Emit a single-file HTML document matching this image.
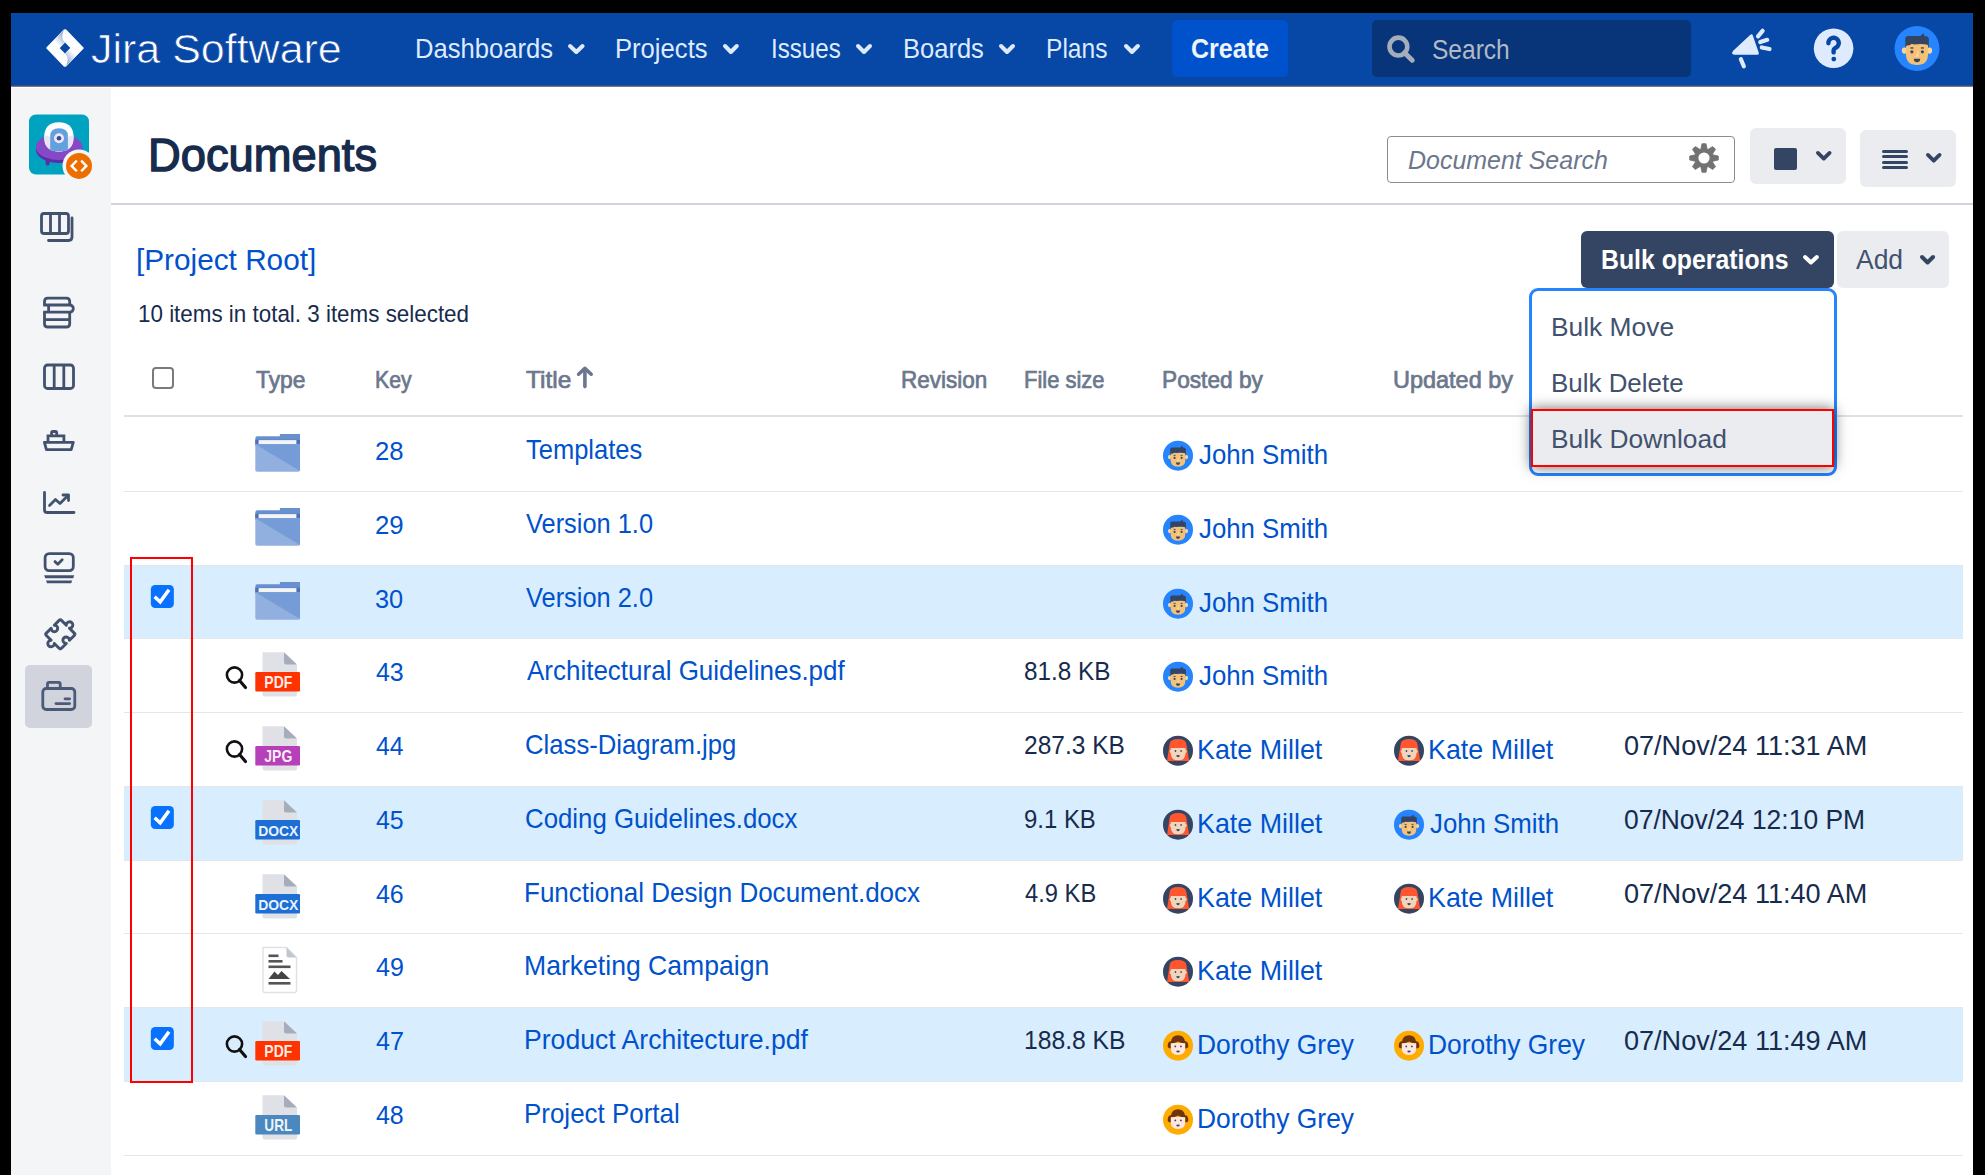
<!DOCTYPE html>
<html><head><meta charset="utf-8"><style>
html,body{margin:0;padding:0;}
body{width:1985px;height:1175px;position:relative;overflow:hidden;background:#000;font-family:"Liberation Sans",sans-serif;}
.t{position:absolute;white-space:nowrap;line-height:1;}
svg{overflow:visible}
</style></head><body>
<div style="position:absolute;left:0.0px;top:0.0px;width:1985.0px;height:1175.0px;background:#000"></div>
<div style="position:absolute;left:11.0px;top:13.0px;width:1962.0px;height:1162.0px;background:#fff"></div>
<div style="position:absolute;left:11.0px;top:13.0px;width:1962.0px;height:73.0px;background:#0747A6"></div>
<div style="position:absolute;left:11.0px;top:85.4px;width:1962.0px;height:1.6px;background:linear-gradient(#1E3A78,#8A8E96)"></div>
<div style="position:absolute;left:11.0px;top:88.0px;width:100.0px;height:1087.0px;background:#F4F5F7"></div>
<svg style="position:absolute;left:44.5px;top:27.7px" width="40" height="40" viewBox="0 0 40 40"><defs>
<linearGradient id="lgA" gradientUnits="userSpaceOnUse" x1="19" y1="8" x2="11" y2="15"><stop offset="0" stop-color="#9CB3DD"/><stop offset="1" stop-color="#ffffff"/></linearGradient>
<linearGradient id="lgB" gradientUnits="userSpaceOnUse" x1="21" y1="32" x2="29" y2="25"><stop offset="0" stop-color="#9CB3DD"/><stop offset="1" stop-color="#ffffff"/></linearGradient></defs>
<path d="M20 1.4 Q20.6 1.1 21.2 1.6 L38.2 19.2 Q38.9 20 38.2 20.8 L21.2 38.4 Q20 39.3 18.8 38.4 L1.8 20.8 Q1.1 20 1.8 19.2 L18.8 1.6 Q19.4 1.1 20 1.4 Z M20 14.6 L14.6 20 L20 25.4 L25.4 20 Z" fill="#fff" fill-rule="evenodd"/>
<path d="M19.2 1.8 L1.8 19.2 Q1.1 20 1.8 20.8 L14.6 20 L20 14.6 Q15 10 19.2 1.8 Z" fill="url(#lgA)"/>
<path d="M20.8 38.2 L38.2 20.8 Q38.9 20 38.2 19.2 L25.4 20 L20 25.4 Q25 30 20.8 38.2 Z" fill="url(#lgB)"/></svg>
<div class="t" style="left:90.76px;top:27.71px;font-size:41.57px;color:#FFFFFF;transform:scaleX(1.0339);transform-origin:0 0;-webkit-text-stroke:0.7px #0747A6;">Jira Software</div>
<div class="t" style="left:414.55px;top:36.34px;font-size:26.89px;color:#DEEBFF;transform:scaleX(0.9518);transform-origin:0 0;">Dashboards</div>
<svg style="position:absolute;left:565.8px;top:41.9px" width="20.600000000000023" height="14.0" viewBox="0 0 20.600000000000023 14.0"><polyline points="4.04,4.04 10.300000000000011,9.96 16.560000000000024,4.04" fill="none" stroke="#DEEBFF" stroke-width="4.08" stroke-linecap="round" stroke-linejoin="round"/></svg>
<div class="t" style="left:615.35px;top:36.34px;font-size:26.89px;color:#DEEBFF;transform:scaleX(0.9534);transform-origin:0 0;">Projects</div>
<svg style="position:absolute;left:721.2px;top:41.9px" width="19.799999999999955" height="14.0" viewBox="0 0 19.799999999999955 14.0"><polyline points="4.04,4.04 9.899999999999977,9.96 15.759999999999955,4.04" fill="none" stroke="#DEEBFF" stroke-width="4.08" stroke-linecap="round" stroke-linejoin="round"/></svg>
<div class="t" style="left:770.53px;top:36.34px;font-size:26.89px;color:#DEEBFF;transform:scaleX(0.8985);transform-origin:0 0;">Issues</div>
<svg style="position:absolute;left:854.0px;top:41.9px" width="20" height="14.0" viewBox="0 0 20 14.0"><polyline points="4.04,4.04 10.0,9.96 15.96,4.04" fill="none" stroke="#DEEBFF" stroke-width="4.08" stroke-linecap="round" stroke-linejoin="round"/></svg>
<div class="t" style="left:902.96px;top:36.34px;font-size:26.89px;color:#DEEBFF;transform:scaleX(0.9495);transform-origin:0 0;">Boards</div>
<svg style="position:absolute;left:997.0px;top:41.9px" width="20" height="14.0" viewBox="0 0 20 14.0"><polyline points="4.04,4.04 10.0,9.96 15.96,4.04" fill="none" stroke="#DEEBFF" stroke-width="4.08" stroke-linecap="round" stroke-linejoin="round"/></svg>
<div class="t" style="left:1046.43px;top:36.34px;font-size:26.89px;color:#DEEBFF;transform:scaleX(0.9137);transform-origin:0 0;">Plans</div>
<svg style="position:absolute;left:1121.5px;top:41.9px" width="19.90000000000009" height="14.0" viewBox="0 0 19.90000000000009 14.0"><polyline points="4.04,4.04 9.950000000000045,9.96 15.860000000000092,4.04" fill="none" stroke="#DEEBFF" stroke-width="4.08" stroke-linecap="round" stroke-linejoin="round"/></svg>
<div style="position:absolute;left:1172.0px;top:20.0px;width:116.0px;height:56.5px;background:#0052CC;border-radius:5px"></div>
<div class="t" style="left:1191.00px;top:35.84px;font-size:26.89px;color:#EEF3FC;font-weight:bold;transform:scaleX(0.9313);transform-origin:0 0;">Create</div>
<div style="position:absolute;left:1372.0px;top:20.0px;width:319.0px;height:56.5px;background:#08357A;border-radius:5px"></div>
<svg style="position:absolute;left:1385.0px;top:34.0px" width="32" height="30" viewBox="0 0 32 30"><circle cx="13.4" cy="12.55" r="8.9" fill="none" stroke="#A5ADBA" stroke-width="4.6"/><line x1="19.5" y1="18.8" x2="27.2" y2="26.2" stroke="#A5ADBA" stroke-width="5" stroke-linecap="round"/></svg>
<div class="t" style="left:1431.70px;top:36.54px;font-size:26.89px;color:#B3BAC5;transform:scaleX(0.9130);transform-origin:0 0;">Search</div>
<svg style="position:absolute;left:1729.0px;top:27.0px" width="46" height="46" viewBox="0 0 46 46"><path d="M5 24 L21.9 8.3 Q22.6 7.6 23 8.6 L29 26 Q29.2 27 28.2 27 L5.5 27 Q2.5 26.5 5 24 Z" fill="#DEEBFF" stroke="#DEEBFF" stroke-width="1.6" stroke-linejoin="round"/>
<line x1="11.9" y1="32.3" x2="14.8" y2="39.3" stroke="#DEEBFF" stroke-width="4.2" stroke-linecap="round"/>
<line x1="29" y1="9.3" x2="33.6" y2="3.8" stroke="#DEEBFF" stroke-width="4.2" stroke-linecap="round"/>
<line x1="31.3" y1="15" x2="38.2" y2="12.8" stroke="#DEEBFF" stroke-width="4.2" stroke-linecap="round"/>
<line x1="32.8" y1="20.5" x2="40.5" y2="22" stroke="#DEEBFF" stroke-width="4.2" stroke-linecap="round"/></svg>
<svg style="position:absolute;left:1813.0px;top:27.0px" width="42" height="42" viewBox="0 0 42 42"><circle cx="20.6" cy="21.3" r="19.8" fill="#DEEBFF"/>
<path d="M15.4 16.2 A5.2 5.2 0 1 1 23.3 20.4 Q20.6 21.6 20.6 23.4 L20.6 25.4" fill="none" stroke="#0747A6" stroke-width="4.4" stroke-linecap="round"/>
<circle cx="20.8" cy="32.1" r="2.4" fill="#0747A6"/></svg>
<svg style="position:absolute;left:1892.0px;top:24.0px" width="50" height="50" viewBox="0 0 50 50"><g transform="translate(25,24.5) scale(1.5)"><circle r="15" fill="#2684FF"/>
<ellipse cx="-8.4" cy="1.4" rx="1.7" ry="2.1" fill="#F9D596"/><ellipse cx="8.4" cy="1.4" rx="1.7" ry="2.1" fill="#F9D596"/>
<path d="M-7.4 -3 L7.4 -3 L7.4 3.5 Q7.4 11 0 11 Q-7.4 11 -7.4 3.5 Z" fill="#F4C176"/>
<path d="M-7.8 -0.5 L-7.8 -6.5 Q-7.8 -8.3 -6 -8.3 L2.2 -8.3 L4.5 -10.3 L4.8 -8.3 Q7.9 -8.3 7.9 -6.3 L7.9 -0.5 L7 -2.5 Q3 -3.6 -2 -2.6 L-3.5 -3.2 L-5 -2.2 L-6.8 -2 Z" fill="#344563"/>
<rect x="-4.4" y="-0.8" width="2" height="0.9" fill="#344563"/><rect x="2.6" y="-0.8" width="2" height="0.9" fill="#344563"/>
<circle cx="-3.4" cy="2.2" r="1.05" fill="#344563"/><circle cx="3.6" cy="2.2" r="1.05" fill="#344563"/>
<path d="M0.1 1.5 L1 1.5 L1 5.5 L-1.2 5.5 Q-1 4 0.1 3.8 Z" fill="#FAD79B"/>
<path d="M-2.2 6.8 L2.2 6.8 Q2 9.2 0 9.2 Q-2 9.2 -2.2 6.8 Z" fill="#344563"/></g></svg>
<svg style="position:absolute;left:26.0px;top:111.0px" width="70" height="70" viewBox="0 0 70 70"><rect x="3" y="3.5" width="60" height="60" rx="7" fill="#00A3BF"/>
<ellipse cx="33.2" cy="38.5" rx="23.4" ry="13.6" fill="#5F2BA8"/>
<ellipse cx="33.2" cy="36" rx="23.4" ry="13" fill="#8549C5"/>
<rect x="19.6" y="47" width="4" height="7.5" rx="2" fill="#5F2BA8"/>
<path d="M18.2 26.5 Q18.2 11.3 32.9 11.3 Q47.6 11.3 47.6 26.5 Q47.6 40.5 32.9 40.5 Q18.2 40.5 18.2 26.5Z" fill="#fff"/>
<path d="M18.3 24 Q32.9 30 47.5 24 Q48 40.5 32.9 40.5 Q17.8 40.5 18.3 24Z" fill="#ECE3F7"/>
<path d="M24.2 39.6 L24.2 25 Q24.2 17.3 33 17.3 Q41.9 17.3 41.9 25 L41.9 39.6 Q33 41 24.2 39.6 Z" fill="#62A1DE"/>
<circle cx="33" cy="27.3" r="5" fill="#EEE6F8"/><circle cx="33" cy="27.3" r="2.3" fill="#344C8A"/>
<circle cx="53" cy="54.9" r="16.5" fill="#F4F5F7"/>
<circle cx="53" cy="54.9" r="13" fill="#EC6D00"/>
<polyline points="50,50.4 45.6,54.9 50,59.4" fill="none" stroke="#fff" stroke-width="2.4" stroke-linecap="square"/>
<polyline points="56,50.4 60.4,54.9 56,59.4" fill="none" stroke="#fff" stroke-width="2.4" stroke-linecap="square"/></svg>
<svg style="position:absolute;left:38.0px;top:210.0px" width="40" height="36" viewBox="0 0 40 36"><rect x="3.5" y="3.5" width="27" height="20" rx="2.5" fill="none" stroke="#42526E" stroke-width="2.8"/>
<line x1="12.5" y1="4" x2="12.5" y2="23" stroke="#42526E" stroke-width="2.8"/><line x1="21.5" y1="4" x2="21.5" y2="23" stroke="#42526E" stroke-width="2.8"/>
<path d="M34 8 L34 27 Q34 30.5 30.5 30.5 L10.5 30.5" fill="none" stroke="#42526E" stroke-width="2.8" stroke-linecap="round"/></svg>
<svg style="position:absolute;left:40.0px;top:294.0px" width="38" height="38" viewBox="0 0 38 38"><g fill="none" stroke="#42526E" stroke-width="2.8">
<path d="M4.5 11 L4.5 7.5 Q4.5 4.2 7.8 4.2 L26.4 4.2 Q29.7 4.2 29.7 7.5 L29.7 11"/>
<path d="M3.2 11 L29.7 11 A3.6 3.6 0 0 1 29.7 18.2 L3.2 18.2"/>
<line x1="8.6" y1="11" x2="8.6" y2="18.2"/>
<path d="M4.5 18.2 L4.5 29.7 Q4.5 33 7.8 33 L26.4 33 Q29.7 33 29.7 29.7 L29.7 18.2"/>
<line x1="4.5" y1="25.6" x2="29.7" y2="25.6"/></g></svg>
<svg style="position:absolute;left:40.0px;top:361.0px" width="38" height="32" viewBox="0 0 38 32"><rect x="4.5" y="4" width="29" height="23.5" rx="3" fill="none" stroke="#42526E" stroke-width="2.8"/>
<line x1="14.2" y1="4" x2="14.2" y2="27.5" stroke="#42526E" stroke-width="2.8"/><line x1="23.8" y1="4" x2="23.8" y2="27.5" stroke="#42526E" stroke-width="2.8"/></svg>
<svg style="position:absolute;left:40.0px;top:426.0px" width="38" height="30" viewBox="0 0 38 30"><path d="M4.4 16.4 L33.3 16.4 L31.2 23.6 L6.4 23.6 Z" fill="none" stroke="#42526E" stroke-width="2.8" stroke-linejoin="round"/>
<path d="M8 16.4 L8 9.9 L23.9 9.9 L23.9 16.4" fill="none" stroke="#42526E" stroke-width="2.8"/>
<path d="M11.6 9.9 L11.6 6.8 Q11.6 5.5 12.9 5.5 L15.4 5.5 Q16.7 5.5 16.7 6.8 L16.7 9.9" fill="none" stroke="#42526E" stroke-width="2.8"/></svg>
<svg style="position:absolute;left:40.0px;top:490.0px" width="38" height="28" viewBox="0 0 38 28"><path d="M4.5 2.5 L4.5 20 Q4.5 22.5 7 22.5 L34 22.5" fill="none" stroke="#42526E" stroke-width="2.8" stroke-linecap="round"/>
<polyline points="9.5,15.5 15.5,9.5 20,13.5 28,5.5" fill="none" stroke="#42526E" stroke-width="2.8" stroke-linecap="round" stroke-linejoin="round"/>
<polyline points="23,5 28.5,5 28.5,10.5" fill="none" stroke="#42526E" stroke-width="2.8" stroke-linecap="round" stroke-linejoin="round"/></svg>
<svg style="position:absolute;left:40.0px;top:549.0px" width="38" height="38" viewBox="0 0 38 38"><rect x="5.1" y="4.6" width="28.2" height="17" rx="4" fill="none" stroke="#42526E" stroke-width="2.8"/>
<polyline points="15,12.6 17.8,15.2 22.2,10.8" fill="none" stroke="#42526E" stroke-width="2.8" stroke-linecap="round" stroke-linejoin="round"/>
<path d="M4.2 26.3 L34.2 26.3 L33.2 29.2 L5.2 29.2 Z" fill="#42526E"/>
<path d="M6 31.4 L32.2 31.4 L31.2 34.3 L7 34.3 Z" fill="#42526E"/></svg>
<svg style="position:absolute;left:40.0px;top:614.0px" width="40" height="40" viewBox="0 0 40 40"><path d="M-8.6 -10.2 L-2.1 -10.2 A3.1 3.1 0 1 1 2.1 -10.2 L8.6 -10.2 Q10.2 -10.2 10.2 -8.6 L10.2 -2.1 A3.1 3.1 0 1 0 10.2 2.1 L10.2 8.6 Q10.2 10.2 8.6 10.2 L2.1 10.2 A3.1 3.1 0 1 1 -2.1 10.2 L-8.6 10.2 Q-10.2 10.2 -10.2 8.6 L-10.2 2.1 A3.1 3.1 0 1 0 -10.2 -2.1 L-10.2 -8.6 Q-10.2 -10.2 -8.6 -10.2 Z" fill="none" stroke="#42526E" stroke-width="2.8" stroke-linejoin="round" transform="translate(20.3 20.3) rotate(45) scale(1.05)"/></svg>
<div style="position:absolute;left:25.0px;top:665.0px;width:67.0px;height:62.5px;background:#D1D4DD;border-radius:5px"></div>
<svg style="position:absolute;left:40.0px;top:678.0px" width="38" height="36" viewBox="0 0 38 36"><rect x="2.8" y="10.5" width="32" height="21" rx="3.5" fill="none" stroke="#4A5A78" stroke-width="2.8"/>
<path d="M7.5 10 L7.5 6 Q7.5 4.4 9.1 4.4 L18.6 4.4 Q20.2 4.4 20.2 6 L20.2 10" fill="none" stroke="#4A5A78" stroke-width="2.8"/>
<line x1="16" y1="25.6" x2="29.6" y2="25.6" stroke="#4A5A78" stroke-width="2.8" stroke-linecap="round"/><line x1="25" y1="20.8" x2="29.6" y2="20.8" stroke="#4A5A78" stroke-width="2.8" stroke-linecap="round"/></svg>
<div class="t" style="left:148.38px;top:133.42px;font-size:45.93px;color:#172B4D;transform:scaleX(0.9862);transform-origin:0 0;-webkit-text-stroke:1.38px #172B4D;">Documents</div>
<div style="position:absolute;left:1387.0px;top:136.0px;width:348.0px;height:47.0px;border:1.5px solid #8C8C8C;border-radius:4px;box-sizing:border-box;background:#fff"></div>
<div class="t" style="left:1407.95px;top:146.95px;font-size:26.16px;color:#6B778C;font-style:italic;transform:scaleX(0.9544);transform-origin:0 0;">Document Search</div>
<svg style="position:absolute;left:1689.1px;top:142.6px" width="30" height="30" viewBox="0 0 30 30"><polygon points="23.00,11.60 29.30,13.00 29.30,17.00 23.00,18.40" fill="#727272" stroke="#727272" stroke-width="0.8" stroke-linejoin="round"/><polygon points="23.06,18.25 26.53,23.70 23.70,26.53 18.25,23.06" fill="#727272" stroke="#727272" stroke-width="0.8" stroke-linejoin="round"/><polygon points="18.40,23.00 17.00,29.30 13.00,29.30 11.60,23.00" fill="#727272" stroke="#727272" stroke-width="0.8" stroke-linejoin="round"/><polygon points="11.75,23.06 6.30,26.53 3.47,23.70 6.94,18.25" fill="#727272" stroke="#727272" stroke-width="0.8" stroke-linejoin="round"/><polygon points="7.00,18.40 0.70,17.00 0.70,13.00 7.00,11.60" fill="#727272" stroke="#727272" stroke-width="0.8" stroke-linejoin="round"/><polygon points="6.94,11.75 3.47,6.30 6.30,3.47 11.75,6.94" fill="#727272" stroke="#727272" stroke-width="0.8" stroke-linejoin="round"/><polygon points="11.60,7.00 13.00,0.70 17.00,0.70 18.40,7.00" fill="#727272" stroke="#727272" stroke-width="0.8" stroke-linejoin="round"/><polygon points="18.25,6.94 23.70,3.47 26.53,6.30 23.06,11.75" fill="#727272" stroke="#727272" stroke-width="0.8" stroke-linejoin="round"/><circle cx="15" cy="15" r="9.2" fill="#727272"/><circle cx="15" cy="15" r="5.6" fill="#fff"/></svg>
<div style="position:absolute;left:1750.0px;top:128.0px;width:96.0px;height:55.5px;background:#EBECF0;border-radius:6px"></div>
<div style="position:absolute;left:1774.2px;top:147.6px;width:22.6px;height:22.2px;background:#344563;border-radius:2px"></div>
<svg style="position:absolute;left:1814.0px;top:149.0px" width="19.5" height="13.5" viewBox="0 0 19.5 13.5"><polyline points="3.92,3.92 9.75,9.58 15.58,3.92" fill="none" stroke="#344563" stroke-width="3.84" stroke-linecap="round" stroke-linejoin="round"/></svg>
<div style="position:absolute;left:1860.0px;top:130.0px;width:96.0px;height:56.7px;background:#EBECF0;border-radius:6px"></div>
<div style="position:absolute;left:1882.4px;top:149.6px;width:25.9px;height:3.2px;background:#344563;border-radius:1.5px"></div>
<div style="position:absolute;left:1882.4px;top:155.2px;width:25.9px;height:3.2px;background:#344563;border-radius:1.5px"></div>
<div style="position:absolute;left:1882.4px;top:160.7px;width:25.9px;height:3.2px;background:#344563;border-radius:1.5px"></div>
<div style="position:absolute;left:1882.4px;top:166.2px;width:25.9px;height:3.2px;background:#344563;border-radius:1.5px"></div>
<svg style="position:absolute;left:1923.8px;top:151.0px" width="19.5" height="13.599999999999994" viewBox="0 0 19.5 13.599999999999994"><polyline points="3.92,3.92 9.75,9.679999999999994 15.58,3.92" fill="none" stroke="#344563" stroke-width="3.84" stroke-linecap="round" stroke-linejoin="round"/></svg>
<div style="position:absolute;left:111.0px;top:203.0px;width:1862.0px;height:1.5px;background:#D0D5DD"></div>
<div class="t" style="left:136.22px;top:244.85px;font-size:29.94px;color:#0052CC;transform:scaleX(0.9938);transform-origin:0 0;">[Project Root]</div>
<div class="t" style="left:137.82px;top:301.75px;font-size:24.27px;color:#172B4D;transform:scaleX(0.9227);transform-origin:0 0;">10 items in total. 3 items selected</div>
<div style="position:absolute;left:1581.0px;top:231.0px;width:252.6px;height:56.5px;background:#344563;border-radius:6px"></div>
<div class="t" style="left:1600.59px;top:246.51px;font-size:27.03px;color:#FFFFFF;font-weight:bold;transform:scaleX(0.9185);transform-origin:0 0;">Bulk operations</div>
<svg style="position:absolute;left:1801.4px;top:252.5px" width="19.899999999999864" height="13.5" viewBox="0 0 19.899999999999864 13.5"><polyline points="4.04,4.04 9.949999999999932,9.46 15.859999999999864,4.04" fill="none" stroke="#FFFFFF" stroke-width="4.08" stroke-linecap="round" stroke-linejoin="round"/></svg>
<div style="position:absolute;left:1837.0px;top:231.0px;width:112.0px;height:56.5px;background:#EBECF0;border-radius:6px"></div>
<div class="t" style="left:1856.10px;top:246.51px;font-size:27.03px;color:#42526E;transform:scaleX(0.9792);transform-origin:0 0;">Add</div>
<svg style="position:absolute;left:1917.6px;top:252.5px" width="19.100000000000136" height="13.5" viewBox="0 0 19.100000000000136 13.5"><polyline points="4.04,4.04 9.550000000000068,9.46 15.060000000000137,4.04" fill="none" stroke="#344563" stroke-width="4.08" stroke-linecap="round" stroke-linejoin="round"/></svg>
<div style="position:absolute;left:151.5px;top:367.0px;width:22.0px;height:22.0px;border:2px solid #7B7B7B;border-radius:4px;box-sizing:border-box;background:#fff"></div>
<div class="t" style="left:255.54px;top:368.42px;font-size:23.84px;color:#6B778C;transform:scaleX(0.9589);transform-origin:0 0;-webkit-text-stroke:0.72px #6B778C;">Type</div>
<div class="t" style="left:375.30px;top:368.42px;font-size:23.84px;color:#6B778C;transform:scaleX(0.8926);transform-origin:0 0;-webkit-text-stroke:0.72px #6B778C;">Key</div>
<div class="t" style="left:525.51px;top:368.42px;font-size:23.84px;color:#6B778C;transform:scaleX(1.0247);transform-origin:0 0;-webkit-text-stroke:0.72px #6B778C;">Title</div>
<div class="t" style="left:900.80px;top:368.42px;font-size:23.84px;color:#6B778C;transform:scaleX(0.9448);transform-origin:0 0;-webkit-text-stroke:0.72px #6B778C;">Revision</div>
<div class="t" style="left:1023.84px;top:368.42px;font-size:23.84px;color:#6B778C;transform:scaleX(0.9220);transform-origin:0 0;-webkit-text-stroke:0.72px #6B778C;">File size</div>
<div class="t" style="left:1162.48px;top:368.42px;font-size:23.84px;color:#6B778C;transform:scaleX(0.9524);transform-origin:0 0;-webkit-text-stroke:0.72px #6B778C;">Posted by</div>
<div class="t" style="left:1392.64px;top:368.42px;font-size:23.84px;color:#6B778C;transform:scaleX(0.9847);transform-origin:0 0;-webkit-text-stroke:0.72px #6B778C;">Updated by</div>
<svg style="position:absolute;left:574.0px;top:365.0px" width="22" height="26" viewBox="0 0 22 26"><line x1="10.9" y1="5" x2="10.9" y2="21.6" stroke="#6B778C" stroke-width="3.6" stroke-linecap="round"/><polyline points="4.6,9.2 10.9,3.4 17.2,9.2" fill="none" stroke="#6B778C" stroke-width="3.6" stroke-linecap="round" stroke-linejoin="round"/></svg>
<div style="position:absolute;left:124.0px;top:415.0px;width:1839.0px;height:2.0px;background:#DFE1E6"></div>
<div style="position:absolute;left:124.0px;top:491.0px;width:1839.0px;height:1.0px;background:#E4E6EA"></div>
<svg style="position:absolute;left:255.0px;top:434.0px" width="46" height="39" viewBox="0 0 46 39"><path d="M0.3 4.4 Q0.3 2.2 2.5 2.2 L24.9 2.2 L24.9 0 L45 0 L45 12 L0.3 12 Z" fill="#6890D0"/>
<rect x="0.3" y="5.8" width="44.7" height="4.6" fill="#4A72B9"/>
<rect x="3.6" y="6.1" width="37.8" height="3.9" fill="#F3F4F6"/>
<path d="M0.3 10.2 L45 10.2 L45 36 Q45 37.8 43.2 37.8 L2.1 37.8 Q0.3 37.8 0.3 36 Z" fill="#92B0DF"/>
<path d="M0.3 10.2 L45 10.2 L45 37 Z" fill="#769CD7"/></svg>
<div class="t" style="left:375.22px;top:437.68px;font-size:26.60px;color:#0052CC;transform:scaleX(0.9657);transform-origin:0 0;">28</div>
<div class="t" style="left:525.99px;top:437.31px;font-size:27.03px;color:#0052CC;transform:scaleX(0.9442);transform-origin:0 0;">Templates</div>
<svg style="position:absolute;left:1161.0px;top:439.0px" width="34" height="34" viewBox="0 0 34 34"><g transform="translate(17,16.7) scale(1.0)"><circle r="15" fill="#2684FF"/>
<ellipse cx="-8.4" cy="1.4" rx="1.7" ry="2.1" fill="#F9D596"/><ellipse cx="8.4" cy="1.4" rx="1.7" ry="2.1" fill="#F9D596"/>
<path d="M-7.4 -3 L7.4 -3 L7.4 3.5 Q7.4 11 0 11 Q-7.4 11 -7.4 3.5 Z" fill="#F4C176"/>
<path d="M-7.8 -0.5 L-7.8 -6.5 Q-7.8 -8.3 -6 -8.3 L2.2 -8.3 L4.5 -10.3 L4.8 -8.3 Q7.9 -8.3 7.9 -6.3 L7.9 -0.5 L7 -2.5 Q3 -3.6 -2 -2.6 L-3.5 -3.2 L-5 -2.2 L-6.8 -2 Z" fill="#344563"/>
<rect x="-4.4" y="-0.8" width="2" height="0.9" fill="#344563"/><rect x="2.6" y="-0.8" width="2" height="0.9" fill="#344563"/>
<circle cx="-3.4" cy="2.2" r="1.05" fill="#344563"/><circle cx="3.6" cy="2.2" r="1.05" fill="#344563"/>
<path d="M0.1 1.5 L1 1.5 L1 5.5 L-1.2 5.5 Q-1 4 0.1 3.8 Z" fill="#FAD79B"/>
<path d="M-2.2 6.8 L2.2 6.8 Q2 9.2 0 9.2 Q-2 9.2 -2.2 6.8 Z" fill="#344563"/></g></svg>
<div class="t" style="left:1198.61px;top:441.51px;font-size:27.03px;color:#0052CC;transform:scaleX(0.9548);transform-origin:0 0;">John Smith</div>
<div style="position:absolute;left:124.0px;top:565.0px;width:1839.0px;height:1.0px;background:#E4E6EA"></div>
<svg style="position:absolute;left:255.0px;top:508.0px" width="46" height="39" viewBox="0 0 46 39"><path d="M0.3 4.4 Q0.3 2.2 2.5 2.2 L24.9 2.2 L24.9 0 L45 0 L45 12 L0.3 12 Z" fill="#6890D0"/>
<rect x="0.3" y="5.8" width="44.7" height="4.6" fill="#4A72B9"/>
<rect x="3.6" y="6.1" width="37.8" height="3.9" fill="#F3F4F6"/>
<path d="M0.3 10.2 L45 10.2 L45 36 Q45 37.8 43.2 37.8 L2.1 37.8 Q0.3 37.8 0.3 36 Z" fill="#92B0DF"/>
<path d="M0.3 10.2 L45 10.2 L45 37 Z" fill="#769CD7"/></svg>
<div class="t" style="left:375.21px;top:511.68px;font-size:26.60px;color:#0052CC;transform:scaleX(0.9704);transform-origin:0 0;">29</div>
<div class="t" style="left:526.37px;top:511.31px;font-size:27.03px;color:#0052CC;transform:scaleX(0.9396);transform-origin:0 0;">Version 1.0</div>
<svg style="position:absolute;left:1161.0px;top:513.0px" width="34" height="34" viewBox="0 0 34 34"><g transform="translate(17,16.7) scale(1.0)"><circle r="15" fill="#2684FF"/>
<ellipse cx="-8.4" cy="1.4" rx="1.7" ry="2.1" fill="#F9D596"/><ellipse cx="8.4" cy="1.4" rx="1.7" ry="2.1" fill="#F9D596"/>
<path d="M-7.4 -3 L7.4 -3 L7.4 3.5 Q7.4 11 0 11 Q-7.4 11 -7.4 3.5 Z" fill="#F4C176"/>
<path d="M-7.8 -0.5 L-7.8 -6.5 Q-7.8 -8.3 -6 -8.3 L2.2 -8.3 L4.5 -10.3 L4.8 -8.3 Q7.9 -8.3 7.9 -6.3 L7.9 -0.5 L7 -2.5 Q3 -3.6 -2 -2.6 L-3.5 -3.2 L-5 -2.2 L-6.8 -2 Z" fill="#344563"/>
<rect x="-4.4" y="-0.8" width="2" height="0.9" fill="#344563"/><rect x="2.6" y="-0.8" width="2" height="0.9" fill="#344563"/>
<circle cx="-3.4" cy="2.2" r="1.05" fill="#344563"/><circle cx="3.6" cy="2.2" r="1.05" fill="#344563"/>
<path d="M0.1 1.5 L1 1.5 L1 5.5 L-1.2 5.5 Q-1 4 0.1 3.8 Z" fill="#FAD79B"/>
<path d="M-2.2 6.8 L2.2 6.8 Q2 9.2 0 9.2 Q-2 9.2 -2.2 6.8 Z" fill="#344563"/></g></svg>
<div class="t" style="left:1198.61px;top:515.51px;font-size:27.03px;color:#0052CC;transform:scaleX(0.9548);transform-origin:0 0;">John Smith</div>
<div style="position:absolute;left:124.0px;top:566.0px;width:1839.0px;height:72.0px;background:#D8EDFE"></div>
<div style="position:absolute;left:124.0px;top:638.0px;width:1839.0px;height:1.0px;background:#E4E6EA"></div>
<svg style="position:absolute;left:150.0px;top:583.6px" width="26" height="26" viewBox="0 0 26 26"><rect x="0.85" y="1" width="23" height="23" rx="4.3" fill="#0872FF"/><polyline points="4.6,12.8 10.2,17.8 19,5.8" fill="none" stroke="#fff" stroke-width="3.5" stroke-linecap="butt" stroke-linejoin="miter"/></svg>
<svg style="position:absolute;left:255.0px;top:582.0px" width="46" height="39" viewBox="0 0 46 39"><path d="M0.3 4.4 Q0.3 2.2 2.5 2.2 L24.9 2.2 L24.9 0 L45 0 L45 12 L0.3 12 Z" fill="#6890D0"/>
<rect x="0.3" y="5.8" width="44.7" height="4.6" fill="#4A72B9"/>
<rect x="3.6" y="6.1" width="37.8" height="3.9" fill="#F3F4F6"/>
<path d="M0.3 10.2 L45 10.2 L45 36 Q45 37.8 43.2 37.8 L2.1 37.8 Q0.3 37.8 0.3 36 Z" fill="#92B0DF"/>
<path d="M0.3 10.2 L45 10.2 L45 37 Z" fill="#769CD7"/></svg>
<div class="t" style="left:375.49px;top:585.68px;font-size:26.60px;color:#0052CC;transform:scaleX(0.9517);transform-origin:0 0;">30</div>
<div class="t" style="left:526.37px;top:585.31px;font-size:27.03px;color:#0052CC;transform:scaleX(0.9396);transform-origin:0 0;">Version 2.0</div>
<svg style="position:absolute;left:1161.0px;top:587.0px" width="34" height="34" viewBox="0 0 34 34"><g transform="translate(17,16.7) scale(1.0)"><circle r="15" fill="#2684FF"/>
<ellipse cx="-8.4" cy="1.4" rx="1.7" ry="2.1" fill="#F9D596"/><ellipse cx="8.4" cy="1.4" rx="1.7" ry="2.1" fill="#F9D596"/>
<path d="M-7.4 -3 L7.4 -3 L7.4 3.5 Q7.4 11 0 11 Q-7.4 11 -7.4 3.5 Z" fill="#F4C176"/>
<path d="M-7.8 -0.5 L-7.8 -6.5 Q-7.8 -8.3 -6 -8.3 L2.2 -8.3 L4.5 -10.3 L4.8 -8.3 Q7.9 -8.3 7.9 -6.3 L7.9 -0.5 L7 -2.5 Q3 -3.6 -2 -2.6 L-3.5 -3.2 L-5 -2.2 L-6.8 -2 Z" fill="#344563"/>
<rect x="-4.4" y="-0.8" width="2" height="0.9" fill="#344563"/><rect x="2.6" y="-0.8" width="2" height="0.9" fill="#344563"/>
<circle cx="-3.4" cy="2.2" r="1.05" fill="#344563"/><circle cx="3.6" cy="2.2" r="1.05" fill="#344563"/>
<path d="M0.1 1.5 L1 1.5 L1 5.5 L-1.2 5.5 Q-1 4 0.1 3.8 Z" fill="#FAD79B"/>
<path d="M-2.2 6.8 L2.2 6.8 Q2 9.2 0 9.2 Q-2 9.2 -2.2 6.8 Z" fill="#344563"/></g></svg>
<div class="t" style="left:1198.61px;top:589.51px;font-size:27.03px;color:#0052CC;transform:scaleX(0.9548);transform-origin:0 0;">John Smith</div>
<div style="position:absolute;left:124.0px;top:712.0px;width:1839.0px;height:1.0px;background:#E4E6EA"></div>
<svg style="position:absolute;left:253.0px;top:650.0px" width="50" height="50" viewBox="0 0 50 50">
<path d="M9.5 2.2 L30.5 2.2 L44 15 L44 44.6 Q44 46.6 42 46.6 L11.5 46.6 Q9.5 46.6 9.5 44.6 Z" fill="#DFE1E6"/>
<path d="M31 2.2 L44 14.5 L33 14.5 Q31 14.5 31 12.5 Z" fill="#A5ADBA"/>
<rect x="2.3" y="22" width="44.7" height="19.5" rx="1.2" fill="#FF3300"/>
<text x="25.3" y="37.9" font-family="Liberation Sans" font-weight="bold" font-size="16.3" fill="#fff" fill-opacity="0.93" text-anchor="middle" textLength="28" lengthAdjust="spacingAndGlyphs">PDF</text></svg>
<svg style="position:absolute;left:222.5px;top:665.3px" width="26" height="26" viewBox="0 0 26 26"><circle cx="11.5" cy="10" r="7.6" fill="none" stroke="#111" stroke-width="2.6"/><line x1="16.5" y1="15.5" x2="22.5" y2="22.5" stroke="#111" stroke-width="3.2" stroke-linecap="round"/></svg>
<div class="t" style="left:376.00px;top:658.68px;font-size:26.60px;color:#0052CC;transform:scaleX(0.9381);transform-origin:0 0;">43</div>
<div class="t" style="left:526.50px;top:658.31px;font-size:27.03px;color:#0052CC;transform:scaleX(0.9618);transform-origin:0 0;">Architectural Guidelines.pdf</div>
<div class="t" style="left:1024.41px;top:658.48px;font-size:26.60px;color:#172B4D;transform:scaleX(0.9127);transform-origin:0 0;">81.8 KB</div>
<svg style="position:absolute;left:1161.0px;top:660.0px" width="34" height="34" viewBox="0 0 34 34"><g transform="translate(17,16.7) scale(1.0)"><circle r="15" fill="#2684FF"/>
<ellipse cx="-8.4" cy="1.4" rx="1.7" ry="2.1" fill="#F9D596"/><ellipse cx="8.4" cy="1.4" rx="1.7" ry="2.1" fill="#F9D596"/>
<path d="M-7.4 -3 L7.4 -3 L7.4 3.5 Q7.4 11 0 11 Q-7.4 11 -7.4 3.5 Z" fill="#F4C176"/>
<path d="M-7.8 -0.5 L-7.8 -6.5 Q-7.8 -8.3 -6 -8.3 L2.2 -8.3 L4.5 -10.3 L4.8 -8.3 Q7.9 -8.3 7.9 -6.3 L7.9 -0.5 L7 -2.5 Q3 -3.6 -2 -2.6 L-3.5 -3.2 L-5 -2.2 L-6.8 -2 Z" fill="#344563"/>
<rect x="-4.4" y="-0.8" width="2" height="0.9" fill="#344563"/><rect x="2.6" y="-0.8" width="2" height="0.9" fill="#344563"/>
<circle cx="-3.4" cy="2.2" r="1.05" fill="#344563"/><circle cx="3.6" cy="2.2" r="1.05" fill="#344563"/>
<path d="M0.1 1.5 L1 1.5 L1 5.5 L-1.2 5.5 Q-1 4 0.1 3.8 Z" fill="#FAD79B"/>
<path d="M-2.2 6.8 L2.2 6.8 Q2 9.2 0 9.2 Q-2 9.2 -2.2 6.8 Z" fill="#344563"/></g></svg>
<div class="t" style="left:1198.61px;top:662.51px;font-size:27.03px;color:#0052CC;transform:scaleX(0.9548);transform-origin:0 0;">John Smith</div>
<div style="position:absolute;left:124.0px;top:786.0px;width:1839.0px;height:1.0px;background:#E4E6EA"></div>
<svg style="position:absolute;left:253.0px;top:724.0px" width="50" height="50" viewBox="0 0 50 50">
<path d="M9.5 2.2 L30.5 2.2 L44 15 L44 44.6 Q44 46.6 42 46.6 L11.5 46.6 Q9.5 46.6 9.5 44.6 Z" fill="#DFE1E6"/>
<path d="M31 2.2 L44 14.5 L33 14.5 Q31 14.5 31 12.5 Z" fill="#A5ADBA"/>
<rect x="2.3" y="22" width="44.7" height="19.5" rx="1.2" fill="#B640B9"/>
<text x="25.3" y="37.9" font-family="Liberation Sans" font-weight="bold" font-size="16.3" fill="#fff" fill-opacity="0.93" text-anchor="middle" textLength="28" lengthAdjust="spacingAndGlyphs">JPG</text></svg>
<svg style="position:absolute;left:222.5px;top:739.3px" width="26" height="26" viewBox="0 0 26 26"><circle cx="11.5" cy="10" r="7.6" fill="none" stroke="#111" stroke-width="2.6"/><line x1="16.5" y1="15.5" x2="22.5" y2="22.5" stroke="#111" stroke-width="3.2" stroke-linecap="round"/></svg>
<div class="t" style="left:376.01px;top:732.68px;font-size:26.60px;color:#0052CC;transform:scaleX(0.9293);transform-origin:0 0;">44</div>
<div class="t" style="left:525.21px;top:732.31px;font-size:27.03px;color:#0052CC;transform:scaleX(0.9510);transform-origin:0 0;">Class-Diagram.jpg</div>
<div class="t" style="left:1024.27px;top:732.48px;font-size:26.60px;color:#172B4D;transform:scaleX(0.9216);transform-origin:0 0;">287.3 KB</div>
<svg style="position:absolute;left:1161.0px;top:734.0px" width="34" height="34" viewBox="0 0 34 34"><g transform="translate(17,16.7) scale(1.0)"><circle r="15" fill="#344563"/>
<path d="M-11 10.2 L-8.3 -7 Q-7.5 -11.6 0 -11.6 Q7.5 -11.6 8.3 -7 L11.2 10.2 Z" fill="#FF5630"/>
<ellipse cx="-7.2" cy="0.6" rx="1" ry="1.6" fill="#F0D5BA"/><ellipse cx="7.6" cy="0.6" rx="1" ry="1.6" fill="#F0D5BA"/>
<path d="M-7.2 -2.7 L7.5 -2.7 L7.5 2.5 Q7.5 9.6 0.2 9.6 Q-7.2 9.6 -7.2 2.5 Z" fill="#F0D5BA"/>
<ellipse cx="-2.5" cy="0.3" rx="0.8" ry="1.1" fill="#344563"/><ellipse cx="3.1" cy="0.3" rx="0.8" ry="1.1" fill="#344563"/>
<path d="M-1.9 4.8 Q0 3.9 2 4.8 Q1.2 6.6 0 6.6 Q-1.2 6.6 -1.9 4.8 Z" fill="#344563"/></g></svg>
<div class="t" style="left:1196.85px;top:736.51px;font-size:27.03px;color:#0052CC;transform:scaleX(0.9934);transform-origin:0 0;">Kate Millet</div>
<svg style="position:absolute;left:1392.0px;top:734.0px" width="34" height="34" viewBox="0 0 34 34"><g transform="translate(17,16.7) scale(1.0)"><circle r="15" fill="#344563"/>
<path d="M-11 10.2 L-8.3 -7 Q-7.5 -11.6 0 -11.6 Q7.5 -11.6 8.3 -7 L11.2 10.2 Z" fill="#FF5630"/>
<ellipse cx="-7.2" cy="0.6" rx="1" ry="1.6" fill="#F0D5BA"/><ellipse cx="7.6" cy="0.6" rx="1" ry="1.6" fill="#F0D5BA"/>
<path d="M-7.2 -2.7 L7.5 -2.7 L7.5 2.5 Q7.5 9.6 0.2 9.6 Q-7.2 9.6 -7.2 2.5 Z" fill="#F0D5BA"/>
<ellipse cx="-2.5" cy="0.3" rx="0.8" ry="1.1" fill="#344563"/><ellipse cx="3.1" cy="0.3" rx="0.8" ry="1.1" fill="#344563"/>
<path d="M-1.9 4.8 Q0 3.9 2 4.8 Q1.2 6.6 0 6.6 Q-1.2 6.6 -1.9 4.8 Z" fill="#344563"/></g></svg>
<div class="t" style="left:1428.35px;top:736.51px;font-size:27.03px;color:#0052CC;transform:scaleX(0.9934);transform-origin:0 0;">Kate Millet</div>
<div class="t" style="left:1623.92px;top:732.76px;font-size:26.74px;color:#172B4D;transform:scaleX(1.0123);transform-origin:0 0;">07/Nov/24 11:31 AM</div>
<div style="position:absolute;left:124.0px;top:787.0px;width:1839.0px;height:73.0px;background:#D8EDFE"></div>
<div style="position:absolute;left:124.0px;top:860.0px;width:1839.0px;height:1.0px;background:#E4E6EA"></div>
<svg style="position:absolute;left:150.0px;top:804.6px" width="26" height="26" viewBox="0 0 26 26"><rect x="0.85" y="1" width="23" height="23" rx="4.3" fill="#0872FF"/><polyline points="4.6,12.8 10.2,17.8 19,5.8" fill="none" stroke="#fff" stroke-width="3.5" stroke-linecap="butt" stroke-linejoin="miter"/></svg>
<svg style="position:absolute;left:253.0px;top:798.0px" width="50" height="50" viewBox="0 0 50 50">
<path d="M9.5 2.2 L30.5 2.2 L44 15 L44 44.6 Q44 46.6 42 46.6 L11.5 46.6 Q9.5 46.6 9.5 44.6 Z" fill="#DFE1E6"/>
<path d="M31 2.2 L44 14.5 L33 14.5 Q31 14.5 31 12.5 Z" fill="#A5ADBA"/>
<rect x="2.3" y="22" width="44.7" height="19.5" rx="1.2" fill="#1D6FD6"/>
<text x="25.3" y="37.9" font-family="Liberation Sans" font-weight="bold" font-size="15" fill="#fff" fill-opacity="0.93" text-anchor="middle" textLength="40.2" lengthAdjust="spacingAndGlyphs">DOCX</text></svg>
<div class="t" style="left:376.00px;top:806.68px;font-size:26.60px;color:#0052CC;transform:scaleX(0.9381);transform-origin:0 0;">45</div>
<div class="t" style="left:525.21px;top:806.31px;font-size:27.03px;color:#0052CC;transform:scaleX(0.9547);transform-origin:0 0;">Coding Guidelines.docx</div>
<div class="t" style="left:1024.42px;top:806.48px;font-size:26.60px;color:#172B4D;transform:scaleX(0.8994);transform-origin:0 0;">9.1 KB</div>
<svg style="position:absolute;left:1161.0px;top:808.0px" width="34" height="34" viewBox="0 0 34 34"><g transform="translate(17,16.7) scale(1.0)"><circle r="15" fill="#344563"/>
<path d="M-11 10.2 L-8.3 -7 Q-7.5 -11.6 0 -11.6 Q7.5 -11.6 8.3 -7 L11.2 10.2 Z" fill="#FF5630"/>
<ellipse cx="-7.2" cy="0.6" rx="1" ry="1.6" fill="#F0D5BA"/><ellipse cx="7.6" cy="0.6" rx="1" ry="1.6" fill="#F0D5BA"/>
<path d="M-7.2 -2.7 L7.5 -2.7 L7.5 2.5 Q7.5 9.6 0.2 9.6 Q-7.2 9.6 -7.2 2.5 Z" fill="#F0D5BA"/>
<ellipse cx="-2.5" cy="0.3" rx="0.8" ry="1.1" fill="#344563"/><ellipse cx="3.1" cy="0.3" rx="0.8" ry="1.1" fill="#344563"/>
<path d="M-1.9 4.8 Q0 3.9 2 4.8 Q1.2 6.6 0 6.6 Q-1.2 6.6 -1.9 4.8 Z" fill="#344563"/></g></svg>
<div class="t" style="left:1196.85px;top:810.51px;font-size:27.03px;color:#0052CC;transform:scaleX(0.9934);transform-origin:0 0;">Kate Millet</div>
<svg style="position:absolute;left:1392.0px;top:808.0px" width="34" height="34" viewBox="0 0 34 34"><g transform="translate(17,16.7) scale(1.0)"><circle r="15" fill="#2684FF"/>
<ellipse cx="-8.4" cy="1.4" rx="1.7" ry="2.1" fill="#F9D596"/><ellipse cx="8.4" cy="1.4" rx="1.7" ry="2.1" fill="#F9D596"/>
<path d="M-7.4 -3 L7.4 -3 L7.4 3.5 Q7.4 11 0 11 Q-7.4 11 -7.4 3.5 Z" fill="#F4C176"/>
<path d="M-7.8 -0.5 L-7.8 -6.5 Q-7.8 -8.3 -6 -8.3 L2.2 -8.3 L4.5 -10.3 L4.8 -8.3 Q7.9 -8.3 7.9 -6.3 L7.9 -0.5 L7 -2.5 Q3 -3.6 -2 -2.6 L-3.5 -3.2 L-5 -2.2 L-6.8 -2 Z" fill="#344563"/>
<rect x="-4.4" y="-0.8" width="2" height="0.9" fill="#344563"/><rect x="2.6" y="-0.8" width="2" height="0.9" fill="#344563"/>
<circle cx="-3.4" cy="2.2" r="1.05" fill="#344563"/><circle cx="3.6" cy="2.2" r="1.05" fill="#344563"/>
<path d="M0.1 1.5 L1 1.5 L1 5.5 L-1.2 5.5 Q-1 4 0.1 3.8 Z" fill="#FAD79B"/>
<path d="M-2.2 6.8 L2.2 6.8 Q2 9.2 0 9.2 Q-2 9.2 -2.2 6.8 Z" fill="#344563"/></g></svg>
<div class="t" style="left:1430.11px;top:810.51px;font-size:27.03px;color:#0052CC;transform:scaleX(0.9548);transform-origin:0 0;">John Smith</div>
<div class="t" style="left:1623.94px;top:806.76px;font-size:26.74px;color:#172B4D;transform:scaleX(0.9893);transform-origin:0 0;">07/Nov/24 12:10 PM</div>
<div style="position:absolute;left:124.0px;top:933.0px;width:1839.0px;height:1.0px;background:#E4E6EA"></div>
<svg style="position:absolute;left:253.0px;top:872.0px" width="50" height="50" viewBox="0 0 50 50">
<path d="M9.5 2.2 L30.5 2.2 L44 15 L44 44.6 Q44 46.6 42 46.6 L11.5 46.6 Q9.5 46.6 9.5 44.6 Z" fill="#DFE1E6"/>
<path d="M31 2.2 L44 14.5 L33 14.5 Q31 14.5 31 12.5 Z" fill="#A5ADBA"/>
<rect x="2.3" y="22" width="44.7" height="19.5" rx="1.2" fill="#1D6FD6"/>
<text x="25.3" y="37.9" font-family="Liberation Sans" font-weight="bold" font-size="15" fill="#fff" fill-opacity="0.93" text-anchor="middle" textLength="40.2" lengthAdjust="spacingAndGlyphs">DOCX</text></svg>
<div class="t" style="left:376.00px;top:880.68px;font-size:26.60px;color:#0052CC;transform:scaleX(0.9381);transform-origin:0 0;">46</div>
<div class="t" style="left:524.42px;top:880.31px;font-size:27.03px;color:#0052CC;transform:scaleX(0.9626);transform-origin:0 0;">Functional Design Document.docx</div>
<div class="t" style="left:1025.03px;top:880.48px;font-size:26.60px;color:#172B4D;transform:scaleX(0.8918);transform-origin:0 0;">4.9 KB</div>
<svg style="position:absolute;left:1161.0px;top:882.0px" width="34" height="34" viewBox="0 0 34 34"><g transform="translate(17,16.7) scale(1.0)"><circle r="15" fill="#344563"/>
<path d="M-11 10.2 L-8.3 -7 Q-7.5 -11.6 0 -11.6 Q7.5 -11.6 8.3 -7 L11.2 10.2 Z" fill="#FF5630"/>
<ellipse cx="-7.2" cy="0.6" rx="1" ry="1.6" fill="#F0D5BA"/><ellipse cx="7.6" cy="0.6" rx="1" ry="1.6" fill="#F0D5BA"/>
<path d="M-7.2 -2.7 L7.5 -2.7 L7.5 2.5 Q7.5 9.6 0.2 9.6 Q-7.2 9.6 -7.2 2.5 Z" fill="#F0D5BA"/>
<ellipse cx="-2.5" cy="0.3" rx="0.8" ry="1.1" fill="#344563"/><ellipse cx="3.1" cy="0.3" rx="0.8" ry="1.1" fill="#344563"/>
<path d="M-1.9 4.8 Q0 3.9 2 4.8 Q1.2 6.6 0 6.6 Q-1.2 6.6 -1.9 4.8 Z" fill="#344563"/></g></svg>
<div class="t" style="left:1196.85px;top:884.51px;font-size:27.03px;color:#0052CC;transform:scaleX(0.9934);transform-origin:0 0;">Kate Millet</div>
<svg style="position:absolute;left:1392.0px;top:882.0px" width="34" height="34" viewBox="0 0 34 34"><g transform="translate(17,16.7) scale(1.0)"><circle r="15" fill="#344563"/>
<path d="M-11 10.2 L-8.3 -7 Q-7.5 -11.6 0 -11.6 Q7.5 -11.6 8.3 -7 L11.2 10.2 Z" fill="#FF5630"/>
<ellipse cx="-7.2" cy="0.6" rx="1" ry="1.6" fill="#F0D5BA"/><ellipse cx="7.6" cy="0.6" rx="1" ry="1.6" fill="#F0D5BA"/>
<path d="M-7.2 -2.7 L7.5 -2.7 L7.5 2.5 Q7.5 9.6 0.2 9.6 Q-7.2 9.6 -7.2 2.5 Z" fill="#F0D5BA"/>
<ellipse cx="-2.5" cy="0.3" rx="0.8" ry="1.1" fill="#344563"/><ellipse cx="3.1" cy="0.3" rx="0.8" ry="1.1" fill="#344563"/>
<path d="M-1.9 4.8 Q0 3.9 2 4.8 Q1.2 6.6 0 6.6 Q-1.2 6.6 -1.9 4.8 Z" fill="#344563"/></g></svg>
<div class="t" style="left:1428.35px;top:884.51px;font-size:27.03px;color:#0052CC;transform:scaleX(0.9934);transform-origin:0 0;">Kate Millet</div>
<div class="t" style="left:1623.92px;top:880.76px;font-size:26.74px;color:#172B4D;transform:scaleX(1.0123);transform-origin:0 0;">07/Nov/24 11:40 AM</div>
<div style="position:absolute;left:124.0px;top:1007.0px;width:1839.0px;height:1.0px;background:#E4E6EA"></div>
<svg style="position:absolute;left:258.0px;top:945.0px" width="44" height="50" viewBox="0 0 44 50"><path d="M5 2.5 L28.5 2.5 L38.5 12.5 L38.5 45.5 Q38.5 47.5 36.5 47.5 L7 47.5 Q5 47.5 5 45.5 Z" fill="#fff" stroke="#DFE1E6" stroke-width="1.4"/>
<path d="M28.5 2.5 L38.5 12.5 L30.5 12.5 Q28.5 12.5 28.5 10.5 Z" fill="#C1C7D0"/>
<rect x="10.5" y="9.5" width="10" height="2.6" fill="#555"/><rect x="10.5" y="15" width="14" height="2.6" fill="#555"/><rect x="10.5" y="20.5" width="22" height="2.6" fill="#555"/>
<path d="M10.5 34 L16.5 26.5 L20 30 L23.5 26 L32 34 Z" fill="#444"/>
<rect x="10.5" y="37" width="22" height="2.6" fill="#555"/></svg>
<div class="t" style="left:376.00px;top:953.68px;font-size:26.60px;color:#0052CC;transform:scaleX(0.9426);transform-origin:0 0;">49</div>
<div class="t" style="left:524.37px;top:953.31px;font-size:27.03px;color:#0052CC;transform:scaleX(0.9838);transform-origin:0 0;">Marketing Campaign</div>
<svg style="position:absolute;left:1161.0px;top:955.0px" width="34" height="34" viewBox="0 0 34 34"><g transform="translate(17,16.7) scale(1.0)"><circle r="15" fill="#344563"/>
<path d="M-11 10.2 L-8.3 -7 Q-7.5 -11.6 0 -11.6 Q7.5 -11.6 8.3 -7 L11.2 10.2 Z" fill="#FF5630"/>
<ellipse cx="-7.2" cy="0.6" rx="1" ry="1.6" fill="#F0D5BA"/><ellipse cx="7.6" cy="0.6" rx="1" ry="1.6" fill="#F0D5BA"/>
<path d="M-7.2 -2.7 L7.5 -2.7 L7.5 2.5 Q7.5 9.6 0.2 9.6 Q-7.2 9.6 -7.2 2.5 Z" fill="#F0D5BA"/>
<ellipse cx="-2.5" cy="0.3" rx="0.8" ry="1.1" fill="#344563"/><ellipse cx="3.1" cy="0.3" rx="0.8" ry="1.1" fill="#344563"/>
<path d="M-1.9 4.8 Q0 3.9 2 4.8 Q1.2 6.6 0 6.6 Q-1.2 6.6 -1.9 4.8 Z" fill="#344563"/></g></svg>
<div class="t" style="left:1196.85px;top:957.51px;font-size:27.03px;color:#0052CC;transform:scaleX(0.9934);transform-origin:0 0;">Kate Millet</div>
<div style="position:absolute;left:124.0px;top:1008.0px;width:1839.0px;height:73.0px;background:#D8EDFE"></div>
<div style="position:absolute;left:124.0px;top:1081.0px;width:1839.0px;height:1.0px;background:#E4E6EA"></div>
<svg style="position:absolute;left:150.0px;top:1025.6px" width="26" height="26" viewBox="0 0 26 26"><rect x="0.85" y="1" width="23" height="23" rx="4.3" fill="#0872FF"/><polyline points="4.6,12.8 10.2,17.8 19,5.8" fill="none" stroke="#fff" stroke-width="3.5" stroke-linecap="butt" stroke-linejoin="miter"/></svg>
<svg style="position:absolute;left:253.0px;top:1019.0px" width="50" height="50" viewBox="0 0 50 50">
<path d="M9.5 2.2 L30.5 2.2 L44 15 L44 44.6 Q44 46.6 42 46.6 L11.5 46.6 Q9.5 46.6 9.5 44.6 Z" fill="#DFE1E6"/>
<path d="M31 2.2 L44 14.5 L33 14.5 Q31 14.5 31 12.5 Z" fill="#A5ADBA"/>
<rect x="2.3" y="22" width="44.7" height="19.5" rx="1.2" fill="#FF3300"/>
<text x="25.3" y="37.9" font-family="Liberation Sans" font-weight="bold" font-size="16.3" fill="#fff" fill-opacity="0.93" text-anchor="middle" textLength="28" lengthAdjust="spacingAndGlyphs">PDF</text></svg>
<svg style="position:absolute;left:222.5px;top:1034.3px" width="26" height="26" viewBox="0 0 26 26"><circle cx="11.5" cy="10" r="7.6" fill="none" stroke="#111" stroke-width="2.6"/><line x1="16.5" y1="15.5" x2="22.5" y2="22.5" stroke="#111" stroke-width="3.2" stroke-linecap="round"/></svg>
<div class="t" style="left:376.00px;top:1027.68px;font-size:26.60px;color:#0052CC;transform:scaleX(0.9471);transform-origin:0 0;">47</div>
<div class="t" style="left:524.37px;top:1027.31px;font-size:27.03px;color:#0052CC;transform:scaleX(0.9845);transform-origin:0 0;">Product Architecture.pdf</div>
<div class="t" style="left:1023.65px;top:1027.48px;font-size:26.60px;color:#172B4D;transform:scaleX(0.9274);transform-origin:0 0;">188.8 KB</div>
<svg style="position:absolute;left:1161.0px;top:1029.0px" width="34" height="34" viewBox="0 0 34 34"><g transform="translate(17,16.7) scale(1.0)"><circle r="15" fill="#FFAB00"/>
<path d="M-7.3 -2.8 L7.3 -2.8 L7.3 2.5 Q7.3 9.3 0 9.3 Q-7.3 9.3 -7.3 2.5 Z" fill="#FFE6DF"/>
<path d="M-10.3 1 Q-10.5 -4.5 -7 -4.5 Q-6 -10.5 0 -10.5 Q6 -10.5 7 -4.5 Q10.5 -4.5 10.3 1 Q9.8 2.8 7.3 2.8 L7.3 -2.4 Q3.5 -2.4 0 -4.3 Q-3.5 -2.4 -7.3 -2.4 L-7.3 2.8 Q-9.8 2.8 -10.3 1 Z" fill="#6E3411"/>
<ellipse cx="-2.7" cy="0.7" rx="0.9" ry="0.9" fill="#344563"/><ellipse cx="2.9" cy="0.7" rx="0.9" ry="0.9" fill="#344563"/>
<path d="M-1.9 5.3 Q0 4.3 2 5.3 Q1.2 6.9 0 6.9 Q-1.2 6.9 -1.9 5.3 Z" fill="#344563"/></g></svg>
<div class="t" style="left:1196.89px;top:1031.51px;font-size:27.03px;color:#0052CC;transform:scaleX(0.9776);transform-origin:0 0;">Dorothy Grey</div>
<svg style="position:absolute;left:1392.0px;top:1029.0px" width="34" height="34" viewBox="0 0 34 34"><g transform="translate(17,16.7) scale(1.0)"><circle r="15" fill="#FFAB00"/>
<path d="M-7.3 -2.8 L7.3 -2.8 L7.3 2.5 Q7.3 9.3 0 9.3 Q-7.3 9.3 -7.3 2.5 Z" fill="#FFE6DF"/>
<path d="M-10.3 1 Q-10.5 -4.5 -7 -4.5 Q-6 -10.5 0 -10.5 Q6 -10.5 7 -4.5 Q10.5 -4.5 10.3 1 Q9.8 2.8 7.3 2.8 L7.3 -2.4 Q3.5 -2.4 0 -4.3 Q-3.5 -2.4 -7.3 -2.4 L-7.3 2.8 Q-9.8 2.8 -10.3 1 Z" fill="#6E3411"/>
<ellipse cx="-2.7" cy="0.7" rx="0.9" ry="0.9" fill="#344563"/><ellipse cx="2.9" cy="0.7" rx="0.9" ry="0.9" fill="#344563"/>
<path d="M-1.9 5.3 Q0 4.3 2 5.3 Q1.2 6.9 0 6.9 Q-1.2 6.9 -1.9 5.3 Z" fill="#344563"/></g></svg>
<div class="t" style="left:1428.39px;top:1031.51px;font-size:27.03px;color:#0052CC;transform:scaleX(0.9776);transform-origin:0 0;">Dorothy Grey</div>
<div class="t" style="left:1623.92px;top:1027.76px;font-size:26.74px;color:#172B4D;transform:scaleX(1.0123);transform-origin:0 0;">07/Nov/24 11:49 AM</div>
<div style="position:absolute;left:124.0px;top:1155.0px;width:1839.0px;height:1.0px;background:#E4E6EA"></div>
<svg style="position:absolute;left:253.0px;top:1093.0px" width="50" height="50" viewBox="0 0 50 50">
<path d="M9.5 2.2 L30.5 2.2 L44 15 L44 44.6 Q44 46.6 42 46.6 L11.5 46.6 Q9.5 46.6 9.5 44.6 Z" fill="#DFE1E6"/>
<path d="M31 2.2 L44 14.5 L33 14.5 Q31 14.5 31 12.5 Z" fill="#A5ADBA"/>
<rect x="2.3" y="22" width="44.7" height="19.5" rx="1.2" fill="#4A88BF"/>
<text x="25.3" y="37.9" font-family="Liberation Sans" font-weight="bold" font-size="16.3" fill="#fff" fill-opacity="0.93" text-anchor="middle" textLength="28" lengthAdjust="spacingAndGlyphs">URL</text></svg>
<div class="t" style="left:376.00px;top:1101.68px;font-size:26.60px;color:#0052CC;transform:scaleX(0.9381);transform-origin:0 0;">48</div>
<div class="t" style="left:524.42px;top:1101.31px;font-size:27.03px;color:#0052CC;transform:scaleX(0.9603);transform-origin:0 0;">Project Portal</div>
<svg style="position:absolute;left:1161.0px;top:1103.0px" width="34" height="34" viewBox="0 0 34 34"><g transform="translate(17,16.7) scale(1.0)"><circle r="15" fill="#FFAB00"/>
<path d="M-7.3 -2.8 L7.3 -2.8 L7.3 2.5 Q7.3 9.3 0 9.3 Q-7.3 9.3 -7.3 2.5 Z" fill="#FFE6DF"/>
<path d="M-10.3 1 Q-10.5 -4.5 -7 -4.5 Q-6 -10.5 0 -10.5 Q6 -10.5 7 -4.5 Q10.5 -4.5 10.3 1 Q9.8 2.8 7.3 2.8 L7.3 -2.4 Q3.5 -2.4 0 -4.3 Q-3.5 -2.4 -7.3 -2.4 L-7.3 2.8 Q-9.8 2.8 -10.3 1 Z" fill="#6E3411"/>
<ellipse cx="-2.7" cy="0.7" rx="0.9" ry="0.9" fill="#344563"/><ellipse cx="2.9" cy="0.7" rx="0.9" ry="0.9" fill="#344563"/>
<path d="M-1.9 5.3 Q0 4.3 2 5.3 Q1.2 6.9 0 6.9 Q-1.2 6.9 -1.9 5.3 Z" fill="#344563"/></g></svg>
<div class="t" style="left:1196.89px;top:1105.51px;font-size:27.03px;color:#0052CC;transform:scaleX(0.9776);transform-origin:0 0;">Dorothy Grey</div>
<div style="position:absolute;left:130.0px;top:556.7px;width:62.5px;height:526.8px;border:2.2px solid #FF0000;box-sizing:border-box"></div>
<div style="position:absolute;left:1529.3px;top:288.2px;width:307.6px;height:187.5px;background:#fff;border:3.6px solid #2684FF;border-radius:9px;box-sizing:border-box"></div>
<div class="t" style="left:1551.19px;top:314.28px;font-size:26.60px;color:#42526E;transform:scaleX(0.9912);transform-origin:0 0;">Bulk Move</div>
<div class="t" style="left:1551.23px;top:369.98px;font-size:26.60px;color:#42526E;transform:scaleX(0.9749);transform-origin:0 0;">Bulk Delete</div>
<div style="position:absolute;left:1530.5px;top:409.0px;width:303.0px;height:58.0px;background:#EBECF0;border:2.5px solid #FF0000;box-sizing:border-box;box-shadow:0 0 13px rgba(0,0,0,0.6)"></div>
<div class="t" style="left:1551.19px;top:426.18px;font-size:26.60px;color:#42526E;transform:scaleX(0.9910);transform-origin:0 0;">Bulk Download</div>
</body></html>
